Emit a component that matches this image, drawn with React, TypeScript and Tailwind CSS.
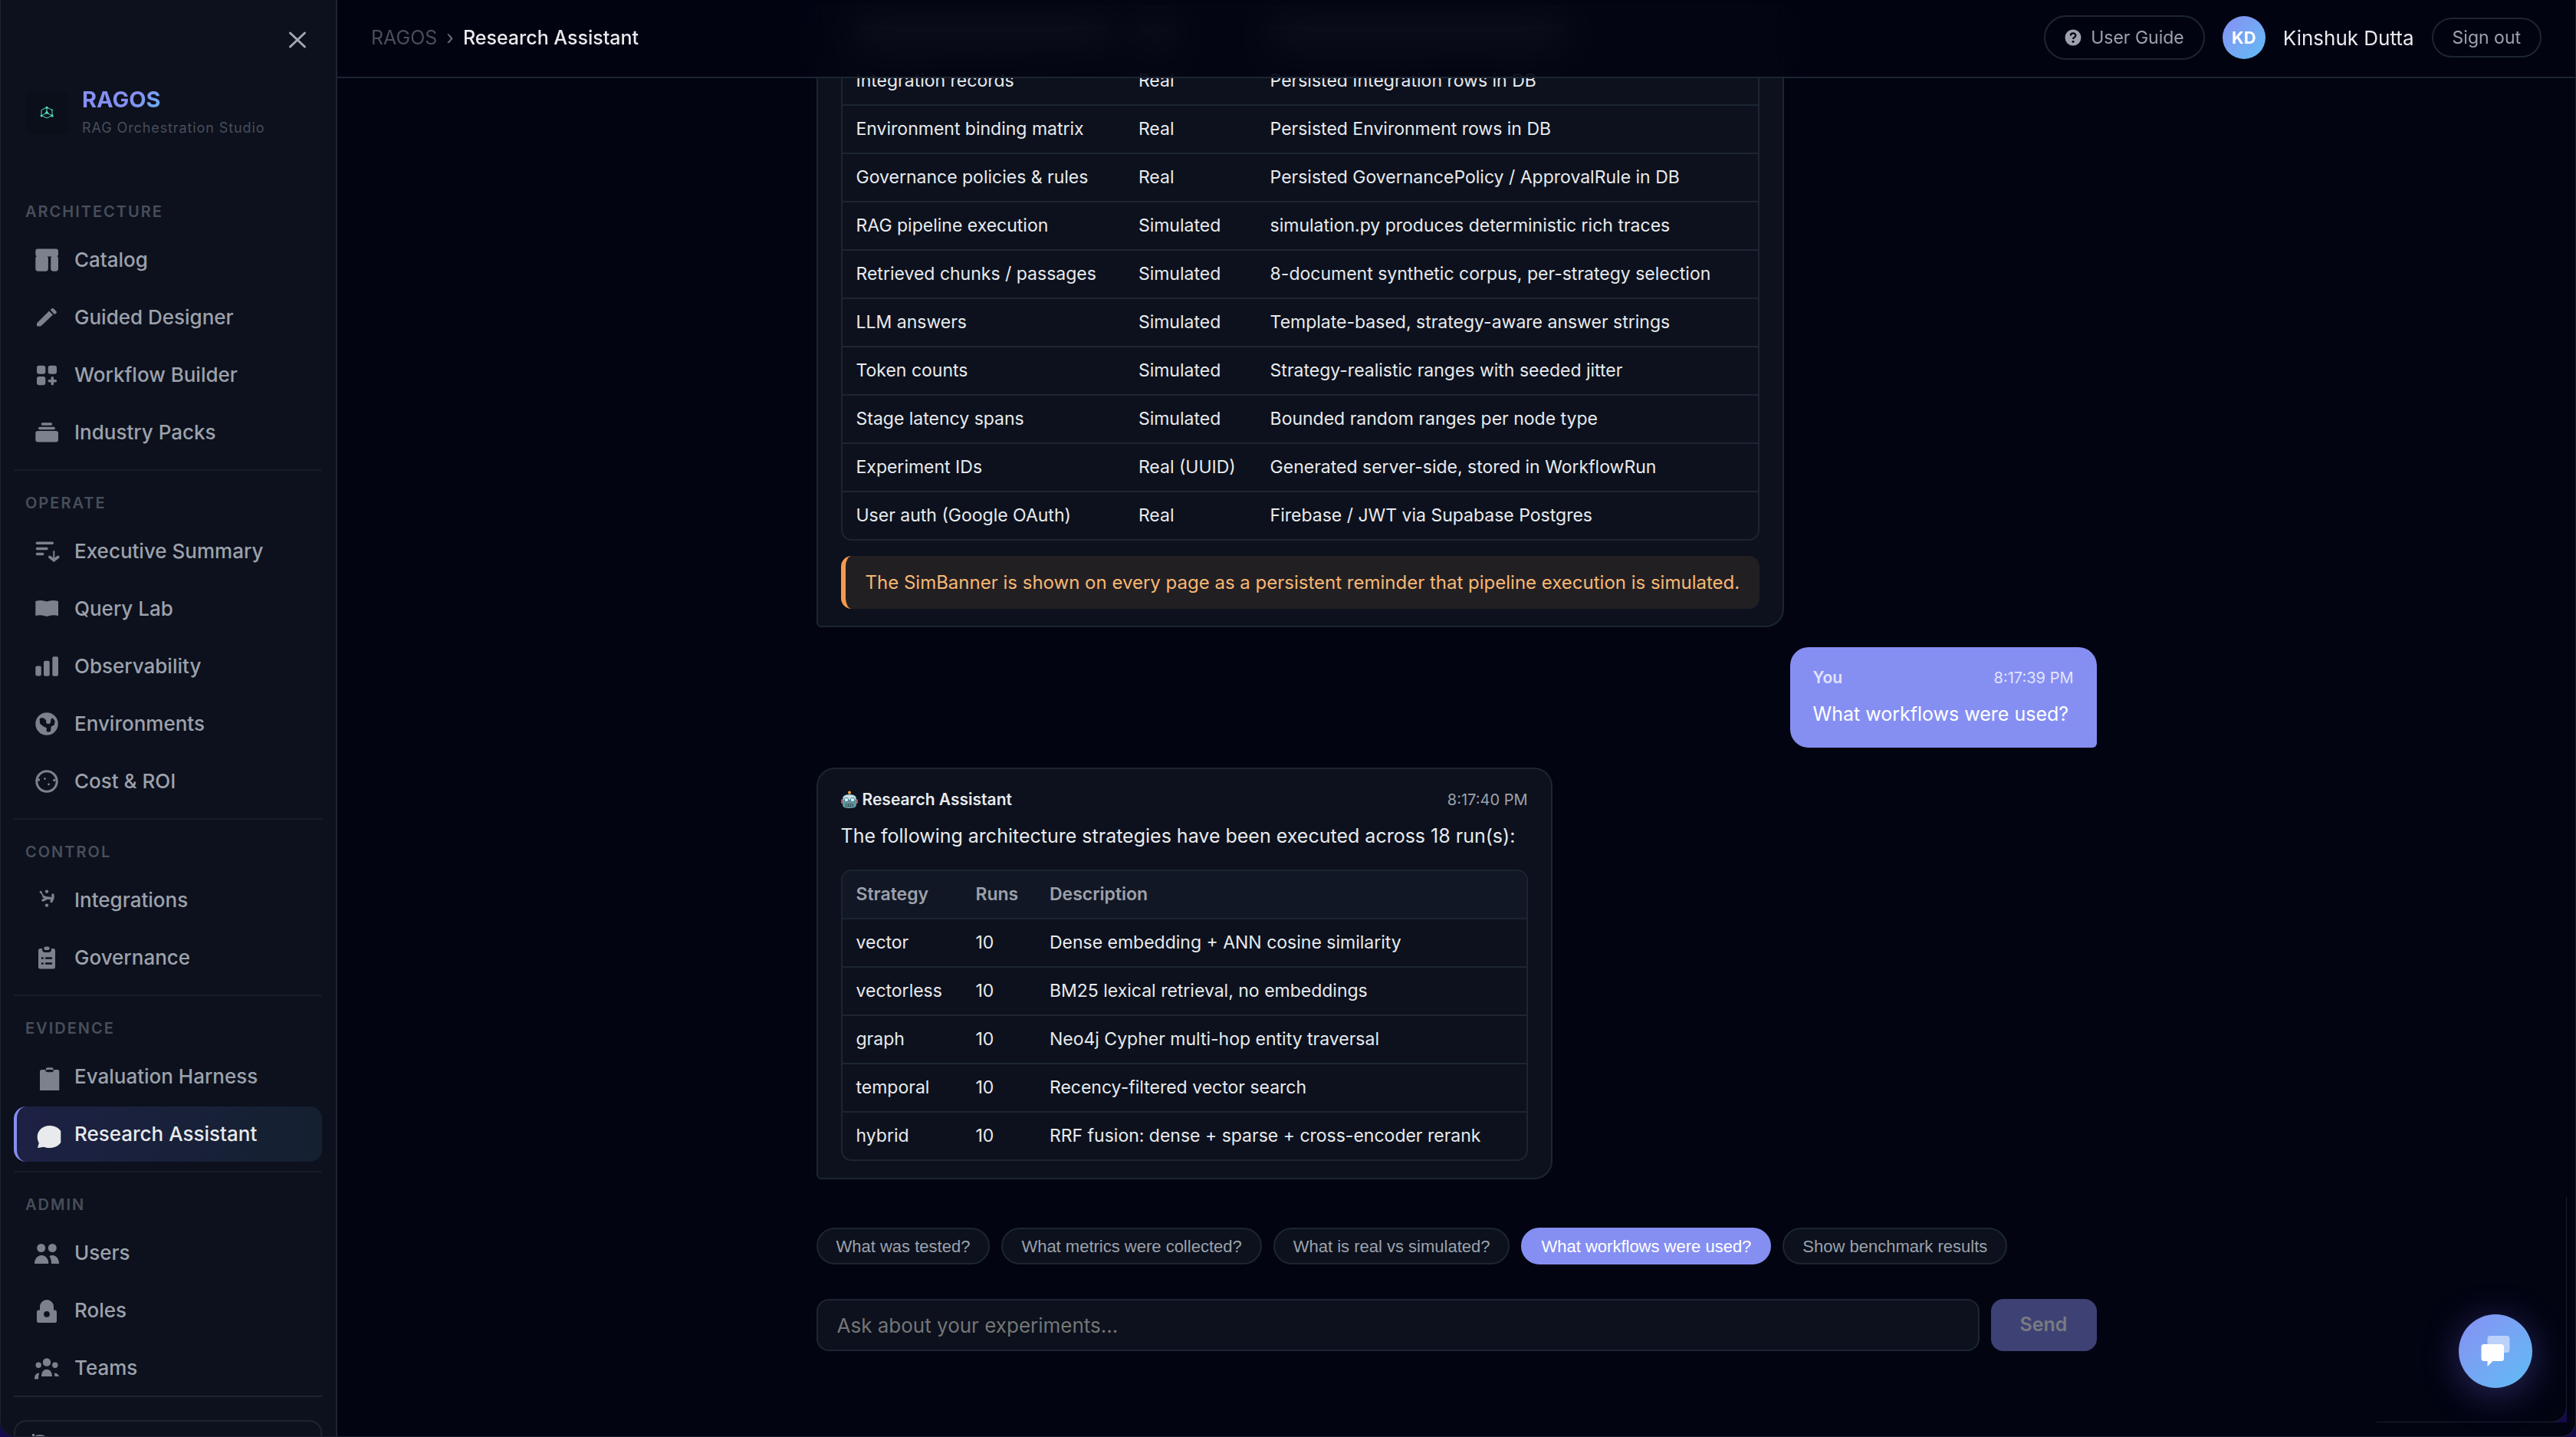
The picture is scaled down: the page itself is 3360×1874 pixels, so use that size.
import { useState, type ReactNode } from "react";

type NavItem = { label: string; icon: ReactNode; active?: boolean };
type NavGroup = { title: string; items: NavItem[] };

const NAV: NavGroup[] = [
  {
    title: "Architecture",
    items: [
      {
        label: "Catalog",
        icon: (
          <>
            <rect x="1.3" y="1.4" width="29.7" height="10.2" rx="3" />
            <rect x="1.3" y="10.8" width="16.6" height="19.9" rx="3.4" />
            <rect x="21.2" y="10.8" width="9.8" height="19.9" rx="3.4" />
          </>
        ),
      },
      {
        label: "Guided Designer",
        icon: (
          <>
            <path d="M3 23.4 19 7.6l5 5L9 26.7q-.8.8-2 .8H4q-1 0-1-1z" />
            <path d="m20.6 6 1.8-1.5q1.4-1 2.8.2l3 3q1.4 1.4.2 2.8L26 12z" />
          </>
        ),
      },
      {
        label: "Workflow Builder",
        icon: (
          <>
            <rect x="3" y="3.7" width="11.3" height="11" rx="3" />
            <rect x="17.7" y="3.7" width="11.3" height="11" rx="3" />
            <rect x="3" y="18" width="11.3" height="11.3" rx="3" />
            <path
              d="M23.3 19.8v8M19.3 23.8h8"
              stroke="currentColor"
              strokeWidth="3.6"
              strokeLinecap="round"
            />
          </>
        ),
      },
      {
        label: "Industry Packs",
        icon: (
          <>
            <rect x="8.7" y="3.2" width="14.5" height="3.6" rx="1.8" />
            <rect x="5" y="8.7" width="22" height="3.6" rx="1.8" />
            <rect x="1.3" y="14" width="29.7" height="14.5" rx="3" />
          </>
        ),
      },
    ],
  },
  {
    title: "Operate",
    items: [
      {
        label: "Executive Summary",
        icon: (
          <>
            <rect x="1.7" y="3.5" width="23.3" height="3.5" rx="1.7" />
            <rect x="1.7" y="10.7" width="16" height="3.5" rx="1.7" />
            <rect x="1.7" y="17.8" width="10.7" height="3.5" rx="1.7" />
            <path
              d="M25.3 16v10"
              fill="none"
              stroke="currentColor"
              strokeWidth="2"
              strokeLinecap="round"
            />
            <path
              d="m20 23.5 5.3 4 5.3-4"
              fill="none"
              stroke="currentColor"
              strokeWidth="4"
              strokeLinecap="round"
            />
          </>
        ),
      },
      {
        label: "Query Lab",
        icon: <path d="M1.3 6Q9 3.6 16 6.5 23 3.6 31 6v19q-8-2-15 1-7-3-14.7-1z" />,
      },
      {
        label: "Observability",
        icon: (
          <>
            <rect x="1.3" y="15.6" width="7.5" height="13" rx="2" />
            <rect x="12" y="8.7" width="7.7" height="20" rx="2" />
            <rect x="23.3" y="3.3" width="7.7" height="25.4" rx="2" />
          </>
        ),
      },
      {
        label: "Environments",
        icon: (
          <>
            <circle cx="16" cy="16" r="14.7" />
            <path
              className="fill-[#0c111d]"
              d="M6.7 9.600 9 8l3 .4 3 2.600.4 4q2 2 5.300 0l.8-5.600L24 8.400l2.700 4-1 5.200-4 1.800-.7 6.300-3.300 1-2-1v-4.400l-4.700-2.300-4-3.500z"
            />
          </>
        ),
      },
      {
        label: "Cost & ROI",
        icon: (
          <>
            <circle cx="16" cy="16" r="13.2" fill="none" stroke="currentColor" strokeWidth="3" />
            <circle cx="5.5" cy="14" r="1.7" />
            <circle cx="13.5" cy="12.6" r="1.4" />
            <circle cx="18.6" cy="19.8" r="1.4" />
            <circle cx="25.8" cy="14.5" r="1.7" />
          </>
        ),
      },
    ],
  },
  {
    title: "Control",
    items: [
      {
        label: "Integrations",
        icon: (
          <>
            <circle cx="8.2" cy="5.2" r="1.5" />
            <circle cx="16" cy="4.6" r="2.2" />
            <circle cx="16" cy="22.6" r="2.2" />
            <path d="m8.2 5.5 4 6" fill="none" stroke="currentColor" strokeWidth="1.6" />
            <path
              d="m12 11.5 4 1.5 5 .5M11 16l5-2.5M24 9v4l-2 4.5"
              fill="none"
              stroke="currentColor"
              strokeWidth="3.4"
              strokeLinecap="round"
              strokeLinejoin="round"
            />
          </>
        ),
      },
      {
        label: "Governance",
        icon: (
          <>
            <rect x="5" y="4" width="22" height="26.5" rx="2.5" />
            <rect className="fill-[#0c111d]" x="10" y="1" width="12" height="8" rx="4" />
            <rect x="12.3" y="1.5" width="7.4" height="4.6" rx="2.3" />
            <path
              className="stroke-[#0c111d]"
              d="M10 16.5h.6M15 16.5h7M10 23.5h.6M15 23.5h7"
              strokeWidth="2.6"
              strokeLinecap="round"
            />
          </>
        ),
      },
    ],
  },
  {
    title: "Evidence",
    items: [
      {
        label: "Evaluation Harness",
        icon: (
          <>
            <path d="M9.5 7H30q2.3 0 2.3 2.3V34H7V9.3Q7 7 9.5 7z" />
            <rect
              className="stroke-[#0c111d]"
              x="14.2"
              y="3.7"
              width="11"
              height="6"
              rx="3"
              strokeWidth="1"
            />
            <rect className="fill-[#0c111d]" x="15.5" y="7" width="8.5" height="2.4" rx="1.2" />
          </>
        ),
      },
      {
        label: "Research Assistant",
        active: true,
        icon: (
          <path d="M19.3 5c6.5 0 12 2.5 15 7v15c-3 4.5-8.5 7-15 7-2.5 0-5-.5-7.3-1.3L4 34l1.8-6.5C4.5 25.3 3.7 22.500 3.7 19.500 3.7 11.500 10.5 5 19.3 5z" />
        ),
      },
    ],
  },
  {
    title: "Admin",
    items: [
      {
        label: "Users",
        icon: (
          <>
            <circle cx="8.7" cy="9.5" r="5.5" />
            <circle cx="23.3" cy="9.5" r="5.5" />
            <path d="M0 30c0-6 3.5-11 9.2-11s9.100 5 9.100 11z" />
            <path d="M19.3 20q2-1 4-1c5.5 0 8.7 5 8.7 11H22c0-4-1-7.5-2.7-10z" />
          </>
        ),
      },
      {
        label: "Roles",
        icon: (
          <path
            fillRule="evenodd"
            d="M7 15.5V11a9 9 0 0 1 18 0v4.5h1.5Q29 15.500 29 18v11.500q0 2.500-2.500 2.500h-21Q3 32 3 29.500V18q0-2.500 2.500-2.500zm9 1.400a3.900 3.900 0 1 0 0 7.800 3.900 3.900 0 0 0 0-7.800z"
          />
        ),
      },
      {
        label: "Teams",
        icon: (
          <>
            <circle cx="16" cy="8.5" r="5.2" />
            <circle cx="5.2" cy="12.3" r="3.7" />
            <circle cx="26.8" cy="12.3" r="3.7" />
            <path d="M9 27c0-5 2.500-9.200 7-9.200s7 4.200 7 9.200zM0 30.500c0-5 2-8 6.200-8Q5 26 5 30.500zM25.500 22.800q5-.6 6.500 4.200h-5.500q-.2-2.500-1-4.200z" />
          </>
        ),
      },
    ],
  },
];

const REALITY_ROWS = [
  ["Integration records", "Real", "Persisted Integration rows in DB"],
  ["Environment binding matrix", "Real", "Persisted Environment rows in DB"],
  ["Governance policies & rules", "Real", "Persisted GovernancePolicy / ApprovalRule in DB"],
  ["RAG pipeline execution", "Simulated", "simulation.py produces deterministic rich traces"],
  ["Retrieved chunks / passages", "Simulated", "8-document synthetic corpus, per-strategy selection"],
  ["LLM answers", "Simulated", "Template-based, strategy-aware answer strings"],
  ["Token counts", "Simulated", "Strategy-realistic ranges with seeded jitter"],
  ["Stage latency spans", "Simulated", "Bounded random ranges per node type"],
  ["Experiment IDs", "Real (UUID)", "Generated server-side, stored in WorkflowRun"],
  ["User auth (Google OAuth)", "Real", "Firebase / JWT via Supabase Postgres"],
];

const STRATEGY_ROWS = [
  ["vector", "10", "Dense embedding + ANN cosine similarity"],
  ["vectorless", "10", "BM25 lexical retrieval, no embeddings"],
  ["graph", "10", "Neo4j Cypher multi-hop entity traversal"],
  ["temporal", "10", "Recency-filtered vector search"],
  ["hybrid", "10", "RRF fusion: dense + sparse + cross-encoder rerank"],
];

const PROMPTS = [
  "What was tested?",
  "What metrics were collected?",
  "What is real vs simulated?",
  "What workflows were used?",
  "Show benchmark results",
];

function Sidebar() {
  return (
    <aside className="flex h-full w-[440px] shrink-0 flex-col overflow-hidden rounded-bl-[20px] border-r-2 border-l border-[#1d2532] bg-[#0c111d] pr-[18px] pl-[17px]">
      <div className="flex justify-end pt-9 pr-4">
        <button type="button" aria-label="Close menu" className="text-[#a3a7b1]">
          <svg viewBox="0 0 32 32" className="size-8" fill="none" stroke="currentColor" strokeWidth="3" strokeLinecap="round">
            <path d="m6.5 7 19 18M25.5 7l-19 18" />
          </svg>
        </button>
      </div>

      <div className="flex items-center gap-[18px] pt-11 pl-[15px]">
        <span className="grid size-14 place-items-center rounded-lg bg-[#0a0f1a]">
          <svg viewBox="0 0 18 18" className="size-[18px] text-[#52dcc0]" fill="none" stroke="currentColor" strokeWidth="1">
            <path d="M9 2 2 5.5v7.2L9 16l7-3.3V5.500zM9 2v6.500M9 9l-7 4M9 9l7 4" />
            <g fill="currentColor" stroke="none">
              <circle cx="9" cy="2.3" r="1.6" />
              <circle cx="2" cy="13" r="1.4" />
              <circle cx="16" cy="13" r="1.7" />
              <circle cx="16" cy="5.5" r="1" />
              <path d="m9 6 3 4.5H6z" />
            </g>
          </svg>
        </span>
        <div className="flex flex-col gap-[5px]">
          <p className="w-fit bg-linear-135 from-[#858ff2] from-60% to-[#60b4f0] bg-clip-text text-[29px] leading-9 font-bold text-transparent">
            RAGOS
          </p>
          <p className="text-[18px] leading-7 tracking-wider text-[#484e5a]">RAG Orchestration Studio</p>
        </div>
      </div>

      <nav className="mt-[83px]">
        {NAV.map((group, i) => (
          <section
            key={group.title}
            className={
              i === 0
                ? "pb-3"
                : i === NAV.length - 1
                  ? "border-t-2 border-[#151b28] pt-[30px]"
                  : "border-t-2 border-[#151b28] pt-[30px] pb-3"
            }
          >
            <h2 className="mb-[15px] pl-[15px] text-[20px] leading-6 font-semibold tracking-widest text-[#484e5a] uppercase">
              {group.title}
            </h2>
            <ul className="flex flex-col gap-[3px]">
              {group.items.map((item) => (
                <li key={item.label}>
                  <a
                    href="#"
                    aria-current={item.active ? "page" : undefined}
                    className={
                      item.active
                        ? "flex h-[72px] items-center gap-5 rounded-2xl border-l-4 border-[#858ff2] bg-linear-to-r from-[#1d2144] to-[#142030] pl-[23px] text-[#e8eaed]"
                        : "flex h-[72px] items-center gap-5 rounded-2xl border-l-4 border-transparent pl-[23px] text-[#9ca1ac]"
                    }
                  >
                    <svg
                      viewBox="0 0 32 32"
                      fill="currentColor"
                      aria-hidden="true"
                      className={item.active ? "size-8 overflow-visible" : "size-8 overflow-visible text-[#7d818d]"}
                    >
                      {item.icon}
                    </svg>
                    <span className="text-[26px] leading-9 font-medium">{item.label}</span>
                  </a>
                </li>
              ))}
            </ul>
          </section>
        ))}
      </nav>

      <div className="shrink-0 border-t-2 border-[#1d2532] pt-[30px]">
        <button
          type="button"
          aria-label="Collapse sidebar"
          className="flex h-16 w-full items-center rounded-2xl border-2 border-[#1d2532] px-5 text-[#7d818d]"
        >
          <svg viewBox="0 0 24 28" className="h-7 w-6" fill="none" stroke="currentColor" strokeWidth="3" aria-hidden="true">
            <path d="M3.5 0v28M4 5q8-5 16 0v10q-8-5-16 0" />
          </svg>
        </button>
      </div>
    </aside>
  );
}

function TopBar() {
  return (
    <header className="absolute inset-x-0 top-0 z-10 flex h-[102px] items-center justify-between border-b-2 border-[#1d2532] bg-[#020412]/85 px-11 pb-0.5 backdrop-blur-xl">
      <nav aria-label="Breadcrumb" className="flex items-center gap-3 text-[25px] leading-8">
        <a href="#" className="text-[#484e5a]">RAGOS</a>
        <span className="text-[#6b707b]">›</span>
        <span className="font-medium text-[#e8eaed]">Research Assistant</span>
      </nav>
      <div className="flex items-center gap-[23px]">
        <a
          href="#"
          className="flex h-[58px] items-center gap-3 rounded-full border-2 border-[#1d2532] px-[25px] text-[23px] text-[#9ca1ac]"
        >
          <svg viewBox="0 0 22 22" className="size-[22px]" aria-hidden="true">
            <circle cx="11" cy="11" r="10.5" fill="currentColor" />
            <path d="M7.8 8.500c0-4.200 6.600-4 6.600-.3 0 2.400-3.300 2.500-3.300 4.800" fill="none" stroke="#020412" strokeWidth="2.2" />
            <circle cx="11.1" cy="16.2" r="1.5" fill="#020412" />
          </svg>
          User Guide
        </a>
        <span className="grid size-14 place-items-center rounded-full bg-linear-135 from-[#858ff2] to-[#5cbcf5] text-[22px] font-bold text-white">
          KD
        </span>
        <span className="text-[26px] text-[#e8eaed]">Kinshuk Dutta</span>
        <button type="button" className="h-[52px] rounded-full border-2 border-[#1d2532] px-[25px] text-[23px] text-[#9ca1ac]">
          Sign out
        </button>
      </div>
    </header>
  );
}

function DataTable({ head, rows, lead }: { head?: string[]; rows: string[][]; lead?: ReactNode }) {
  return (
    <div className="overflow-hidden rounded-[14px] border-2 border-[#1d2532]">
      <table className="w-full text-left text-[23px] leading-[34px] text-[#e8eaed]">
        {head && (
          <thead>
            <tr className="border-b-2 border-[#1d2532] bg-[#111724] text-[#9ca1ac]">
              {head.map((h) => (
                <th key={h} className="px-[18px] pt-[13px] pb-3.5 font-semibold last:pr-7">
                  {h}
                </th>
              ))}
            </tr>
          </thead>
        )}
        <tbody>
          {lead}
          {rows.map((row) => (
            <tr key={row[0]} className="border-b-2 border-[#1d2532] last:border-b-0">
              {row.map((cell, i) => (
                <td key={i} className="px-[18px] pt-[13px] pb-3.5 last:pr-7">
                  {cell}
                </td>
              ))}
            </tr>
          ))}
        </tbody>
      </table>
    </div>
  );
}

function Robot() {
  return (
    <svg viewBox="0 0 22 24" className="h-6 w-[22px]" aria-hidden="true">
      <circle cx="11" cy="2.5" r="2" fill="#f2a33c" />
      <path d="M10.3 4h1.400v3h-1.400z" fill="#8c9aa0" />
      <rect x="0" y="11" width="3" height="6" rx="1.5" fill="#c2504a" />
      <rect x="19" y="11" width="3" height="6" rx="1.5" fill="#c2504a" />
      <path d="M2 10q0-5 9-5t9 5v9q0 4-9 4t-9-4z" fill="#5b98a6" />
      <path d="M3 10q0-4.500 8-4.500t8 4.500v2H3z" fill="#c9dfe3" />
      <circle cx="7" cy="12" r="2.7" fill="#d9f3f8" stroke="#3c7f90" />
      <circle cx="15" cy="12" r="2.7" fill="#d9f3f8" stroke="#3c7f90" />
      <path d="m11 13 1.500 2.500h-3z" fill="#d9534f" />
      <rect x="6" y="17.5" width="10" height="3.5" rx="1" fill="#26474f" />
      <path d="M8 18v2.500M11 18v2.500M14 18v2.500" stroke="#e5c98d" />
    </svg>
  );
}

export default function App() {
  const [draft, setDraft] = useState("");
  const selected = "What workflows were used?";

  return (
    <div className="h-screen bg-[#160a4e] font-[Inter,sans-serif]">
      <div className="flex h-full overflow-hidden rounded-b-[20px] border-r border-b border-[#1a2030] bg-[#020412]">
        <Sidebar />
        <main className="relative flex min-w-0 flex-1 flex-col justify-end overflow-hidden">
          <TopBar />

          <div className="mx-auto flex w-full max-w-[1670px] shrink-0 flex-col pb-[111px]">
            <div className="flex flex-col gap-[26px]">
              <article className="w-fit rounded-b-[24px] rounded-bl-md border-2 border-[#1d2532] bg-[#0c111d] px-[30px] pb-[22px]">
                <DataTable
                  rows={REALITY_ROWS}
                  lead={
                    <tr aria-hidden="true" className="border-b-2 border-[#1d2532]">
                      <td className="h-[63px] px-[18px]">
                        <div className="h-4 rounded bg-[#9ca1ac]" />
                      </td>
                      <td className="px-[18px]">
                        <div className="h-4 w-12 rounded bg-[#9ca1ac]" />
                      </td>
                      <td className="px-[18px]">
                        <div className="h-4 w-96 rounded bg-[#9ca1ac]" />
                      </td>
                    </tr>
                  }
                />
                <p className="mt-5 rounded-[14px] border-l-6 border-[#f59a4c] bg-[#221f23] px-[26px] py-[17px] text-[24px] leading-[35px] text-[#f6b873]">
                  The SimBanner is shown on every page as a persistent reminder that pipeline execution is simulated.
                </p>
              </article>

              <article className="ml-auto w-[400px] rounded-[24px] rounded-br-md bg-[#858ff2] px-[30px] pt-6 pb-[22px]">
                <div className="flex items-center justify-between text-[21px] leading-8 text-[#e3e5fc]">
                  <strong className="font-semibold">You</strong>
                  <time className="text-[20px]">8:17:39 PM</time>
                </div>
                <p className="mt-2.5 text-[25px] leading-[43px] text-white">What workflows were used?</p>
              </article>

              <article className="w-[960px] rounded-[24px] rounded-bl-md border-2 border-[#1d2532] bg-[#0c111d] px-[30px] pt-6 pb-[22px]">
                <div className="flex items-center justify-between text-[21px] leading-8">
                  <strong className="flex items-center gap-1.5 font-semibold text-[#e8eaed]">
                    <Robot />
                    Research Assistant
                  </strong>
                  <time className="text-[20px] text-[#9ca1ac]">8:17:40 PM</time>
                </div>
                <p className="mt-2.5 mb-[22px] text-[25px] leading-[43px] text-[#e8eaed]">
                  The following architecture strategies have been executed across 18 run(s):
                </p>
                <DataTable head={["Strategy", "Runs", "Description"]} rows={STRATEGY_ROWS} />
              </article>
            </div>

            <div className="mt-[63px] flex flex-wrap gap-[15px]">
              {PROMPTS.map((prompt) => (
                <button
                  key={prompt}
                  type="button"
                  onClick={() => setDraft(prompt)}
                  className={
                    prompt === selected
                      ? "h-12 rounded-full border-2 border-[#858ff2] bg-[#858ff2] px-6 font-['Liberation_Sans',sans-serif] text-[22px] text-white"
                      : "h-12 rounded-full border-2 border-[#1d2532] bg-[#0c111d] px-6 font-['Liberation_Sans',sans-serif] text-[22px] text-[#9ca1ac]"
                  }
                >
                  {prompt}
                </button>
              ))}
            </div>

            <form className="mt-[45px] flex gap-[15px]" onSubmit={(e) => e.preventDefault()}>
              <input
                type="text"
                aria-label="Ask about your experiments"
                placeholder="Ask about your experiments..."
                value={draft}
                onChange={(e) => setDraft(e.target.value)}
                className="h-[68px] min-w-0 flex-1 rounded-2xl border-2 border-[#1d2532] bg-[#0c111d] px-[25px] text-[26px] text-[#e8eaed] placeholder:text-[#757575]"
              />
              <button
                type="submit"
                className="w-[138px] rounded-2xl bg-[#3d4174] text-[25px] font-semibold text-[#797b80]"
              >
                Send
              </button>
            </form>
          </div>

          <div className="pointer-events-none absolute right-[11px] bottom-[18px] h-[294px] w-[248px] bg-linear-to-tl from-[#160a4e] from-5% to-transparent to-5%">
            <div className="size-full rounded-br-[20px] border-r border-b border-[#1a2030] bg-[#020412]" />
          </div>
          <button
            type="button"
            aria-label="Open chat"
            className="absolute right-14 bottom-[63px] grid size-24 place-items-center rounded-full bg-linear-135 from-[#858ff2] to-[#5cbcf5] shadow-[0_8px_48px_rgba(120,110,240,0.35)]"
          >
            <svg viewBox="0 0 40 42" className="h-[42px] w-10" fill="white" aria-hidden="true">
              <rect x="9.5" y="1" width="29" height="22" rx="4" opacity=".5" />
              <path d="M5 12h22.500q3.500 0 3.500 3.500V30.500q0 3.500-3.500 3.500H16.500l-7 7v-7H5q-3.500 0-3.500-3.500v-15Q1.500 12 5 12z" />
            </svg>
          </button>
        </main>
      </div>
    </div>
  );
}
